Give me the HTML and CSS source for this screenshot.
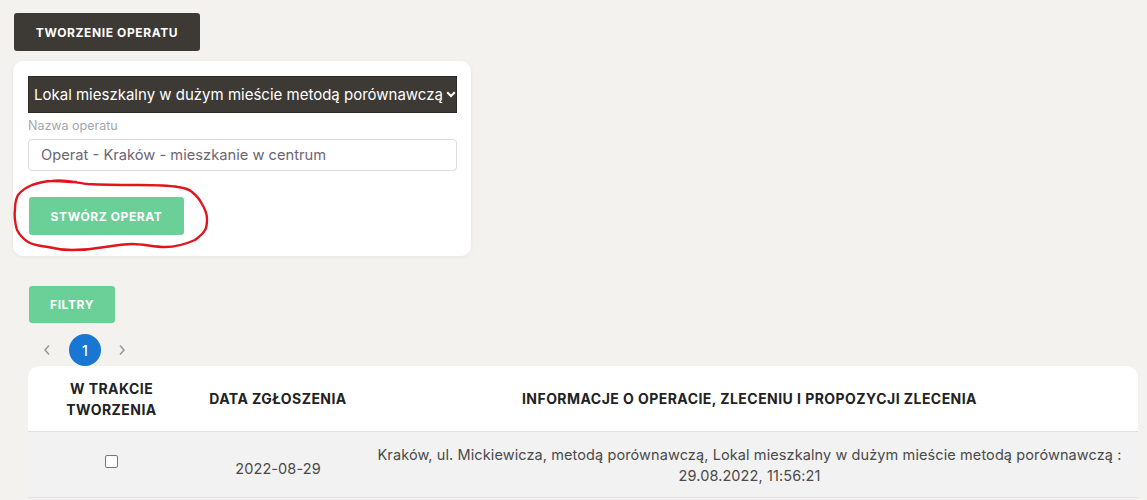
FILE: index.html
```html
<!DOCTYPE html>
<html lang="pl">
<head>
<meta charset="utf-8">
<link rel="stylesheet" href="styles.css">
</head>
<body>
<div class="page">
  <button class="btn btn-dark">TWORZENIE OPERATU</button>
  <div class="card">
    <div class="select">
      <span>Lokal mieszkalny w dużym mieście metodą porównawczą</span>
      <svg class="chev" width="10" height="7" viewBox="0 0 10 7"><path d="M1.2 1.3 L5 5 L8.8 1.3" fill="none" stroke="#fff" stroke-width="2"/></svg>
    </div>
    <div class="label">Nazwa operatu</div>
    <div class="input">Operat - Kraków - mieszkanie w centrum</div>
    <div class="create-wrap">
      <button class="btn btn-green btn-create">STWÓRZ OPERAT</button>
      <svg class="circle-mark" width="220" height="90" viewBox="0 0 220 90"><path d="M52 11 C64 9 76 13 88 14 C105 15 121 15 138 15 C152 15 166 15 178 17 C185 18 189 19 192 22 C197 26 200 30 202 34 C205 39 207 44 207 49 C207 53 207 57 205 60 C203 64 199 67 195 70 C186 74 176 77 165 77 C154 77 143 74 132 74 C122 74 114 76 105 77 C94 79 83 80 72 80 C64 80 56 79 48 77 C40 76 33 75 28 72 C22 68 19 64 17 60 C15 53 14 46 15 39 C15 34 16 29 18 25 C22 20 27 17 32 15 C38 13 45 11 52 11 C60 11 68 12 76 12" fill="none" stroke="#e3141c" stroke-width="2.4" stroke-linecap="round" stroke-linejoin="round"/></svg>
    </div>
  </div>
  <button class="btn btn-green btn-filter">FILTRY</button>
  <div class="pager">
    <span class="arrow">
      <svg width="8" height="12" viewBox="0 0 8 12"><path d="M6 1.5 L2 6 L6 10.5" fill="none" stroke="#9a9a9a" stroke-width="1.6"/></svg>
    </span>
    <span class="page-num">1</span>
    <span class="arrow">
      <svg width="8" height="12" viewBox="0 0 8 12"><path d="M2 1.5 L6 6 L2 10.5" fill="none" stroke="#9a9a9a" stroke-width="1.6"/></svg>
    </span>
  </div>
  <table class="tbl">
    <thead>
      <tr>
        <th class="c1">W TRAKCIE<br>TWORZENIA</th>
        <th class="c2">DATA ZGŁOSZENIA</th>
        <th class="c3">INFORMACJE O OPERACIE, ZLECENIU I PROPOZYCJI ZLECENIA</th>
      </tr>
    </thead>
    <tbody>
      <tr>
        <td class="c1"><span class="check"></span></td>
        <td class="c2">2022-08-29</td>
        <td class="c3">Kraków, ul. Mickiewicza, metodą porównawczą, Lokal mieszkalny w dużym mieście metodą porównawczą :<br>29.08.2022, 11:56:21</td>
      </tr>
    </tbody>
  </table>
</div>
</body>
</html>
```
FILE: styles.css
```css
* { box-sizing: border-box; }
html, body { margin: 0; padding: 0; }
body {
  background: #f3f2ef;
  font-family: "Inter", "Open Sans", sans-serif;
  color: #2b2b2b;
  overflow: hidden;
}
.page {
  padding: 13px 9px 0 13px;
  display: flex;
  flex-direction: column;
  align-items: flex-start;
}
.btn {
  border: 0;
  border-radius: 3px;
  color: #fff;
  font-family: "Inter", sans-serif;
  font-weight: 700;
  font-size: 12px;
  letter-spacing: 0.6px;
  height: 38px;
  padding: 0;
  cursor: pointer;
}
.btn-dark {
  background: #3d3934;
  width: 186px;
  margin-left: 1px;
}
.btn-green { background: #6bd097; }
.card {
  margin-top: 10px;
  width: 458px;
  background: #fff;
  border-radius: 10px;
  box-shadow: 0 1px 4px rgba(0,0,0,0.06);
  padding: 15px 14px 21px 15px;
  display: flex;
  flex-direction: column;
}
.select {
  height: 37px;
  background: #3d3934;
  color: #fff;
  font-size: 15px;
  display: flex;
  align-items: center;
  justify-content: space-between;
  padding: 0 4px 0 5px;
  border: 1px solid #2e2b27;
  white-space: nowrap;
}
.chev { flex: none; margin-left: 3px; }
.label {
  margin-top: 6px;
  font-size: 12.5px;
  color: #a3a6ad;
  height: 20px;
  line-height: 14px;
}
.input {
  height: 32px;
  border: 1px solid #dcdcdc;
  border-radius: 4px;
  padding: 0 12px;
  display: flex;
  align-items: center;
  font-size: 14.7px;
  color: #6b6670;
}
.create-wrap {
  position: relative;
  margin-top: 26px;
  display: flex;
}
.btn-create { width: 155px; margin-left: 1px; }
.circle-mark {
  position: absolute;
  left: -28px;
  top: -27px;
  pointer-events: none;
}
.btn-filter {
  margin-top: 30px;
  margin-left: 16px;
  width: 86px;
  height: 37px;
}
.pager {
  margin-left: 27px;
  margin-top: 11px;
  height: 32px;
  display: flex;
  align-items: center;
}
.arrow {
  width: 14px;
  display: flex;
  justify-content: center;
}
.page-num {
  width: 32px;
  height: 32px;
  border-radius: 50%;
  background: #1976d2;
  color: #fff;
  font-size: 14px;
  font-weight: 500;
  display: flex;
  align-items: center;
  justify-content: center;
  margin: 0 14px 0 15px;
}
.tbl {
  margin-top: 0;
  margin-left: 15px;
  width: 1110px;
  border-collapse: separate;
  border-spacing: 0;
  background: #fff;
  border-radius: 12px 12px 0 0;
  overflow: hidden;
}
.tbl th {
  height: 66px;
  font-size: 14px;
  font-weight: 700;
  letter-spacing: 0.45px;
  color: #222;
  text-align: center;
  padding: 0 4px;
  line-height: 21px;
  border-bottom: 1px solid #dfdfe3;
}
.tbl td {
  background: #f2f2f2;
  height: 66px;
  text-align: center;
  font-size: 14.5px;
  letter-spacing: 0.1px;
  color: #4a4a4a;
  line-height: 21px;
  padding: 0 8px;
  border-bottom: 1px solid #dfdfe3;
}
.c1 { width: 167px; }
.c2 { width: 166px; }
.tbl td.c1 { vertical-align: top; padding-top: 20px; }
.tbl td.c2 { padding-top: 8px; }
.tbl td.c3 { padding-top: 0; }
.check {
  display: inline-block;
  width: 13px;
  height: 13px;
  border: 1px solid #767676;
  border-radius: 2px;
  background: #fff;
}
```
